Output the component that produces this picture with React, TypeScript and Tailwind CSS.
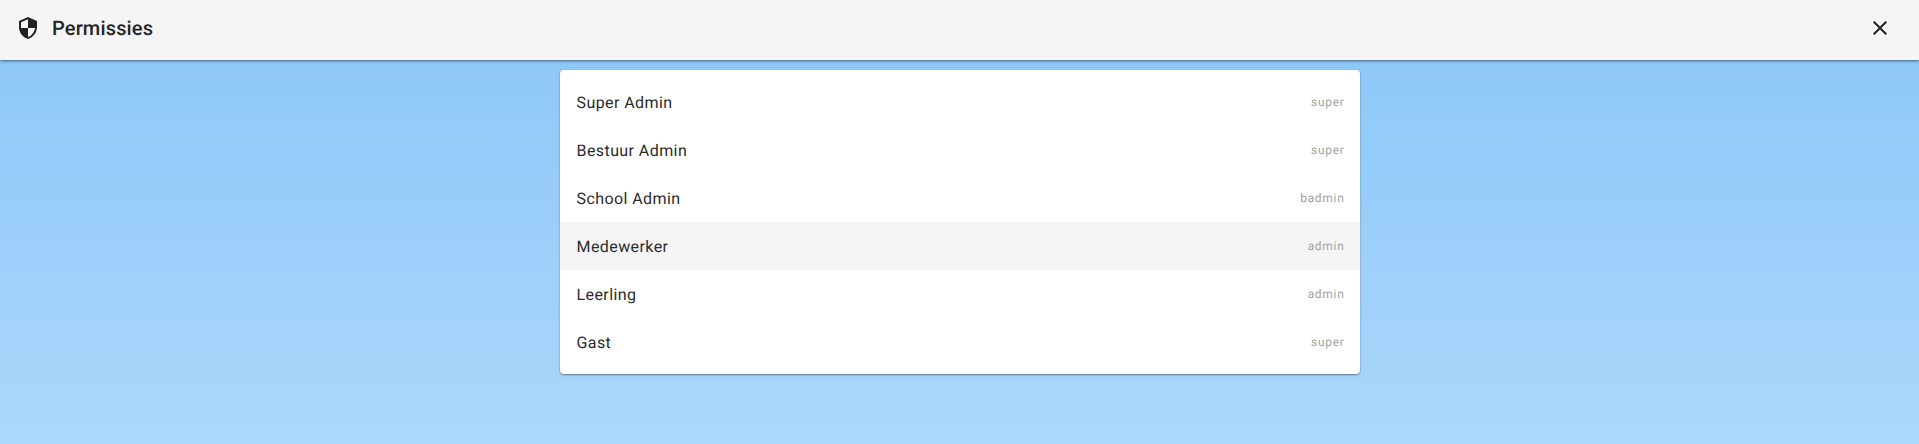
const rows = [
  ["Super Admin", "super"],
  ["Bestuur Admin", "super"],
  ["School Admin", "badmin"],
  ["Medewerker", "admin"],
  ["Leerling", "admin"],
  ["Gast", "super"],
];

export default function App() {
  return (
    <div className="w-[1919px] h-[444px] overflow-hidden flex flex-col font-['Roboto',sans-serif] [text-rendering:geometricPrecision]">
      <header className="relative z-10 h-[60px] shrink-0 bg-[#f5f5f5] flex items-center justify-between pl-4 pr-[27px] pb-1 shadow-[0_1px_3px_0_rgba(0,0,0,.5)]">
        <div className="flex items-center gap-3">
          <svg width="24" height="24" viewBox="0 0 24 24" fill="#212121"><path d="M12 1 3 5v6c0 5.55 3.84 10.74 9 12 5.16-1.26 9-6.45 9-12V5l-9-4zm0 10.99h7c-.53 4.12-3.28 7.79-7 8.94V12H5V6.3l7-3.11v8.8z"/></svg>
          <span className="text-[20px] font-medium text-[#262626] tracking-[.15px]">Permissies</span>
        </div>
        <svg width="24" height="24" viewBox="0 0 24 24" fill="#212121"><path d="M19 6.41 17.59 5 12 10.59 6.41 5 5 6.41 10.59 12 5 17.59 6.41 19 12 13.41 17.59 19 19 17.59 13.41 12z"/></svg>
      </header>
      <div className="flex-1 flex justify-center pt-[10px] bg-gradient-to-b from-[#8ec8f9] to-[#abd7fb]">
        <div className="w-[800px] h-[304px] py-2 bg-white rounded shadow-[0_1px_2px_0_rgba(0,0,0,.45)]">
          {rows.map(([name, role]) => (
            <div key={name} className={`h-12 pl-4 pr-[15px] flex items-center justify-between ${name === "Medewerker" ? "bg-[#f5f5f5]" : ""}`}>
              <span className="pl-px pt-px text-base font-normal text-[#2b2b2b] tracking-[.42px]">{name}</span>
              <span className="text-xs text-[#a3a3a3] tracking-[.7px]">{role}</span>
            </div>
          ))}
        </div>
      </div>
    </div>
  );
}
